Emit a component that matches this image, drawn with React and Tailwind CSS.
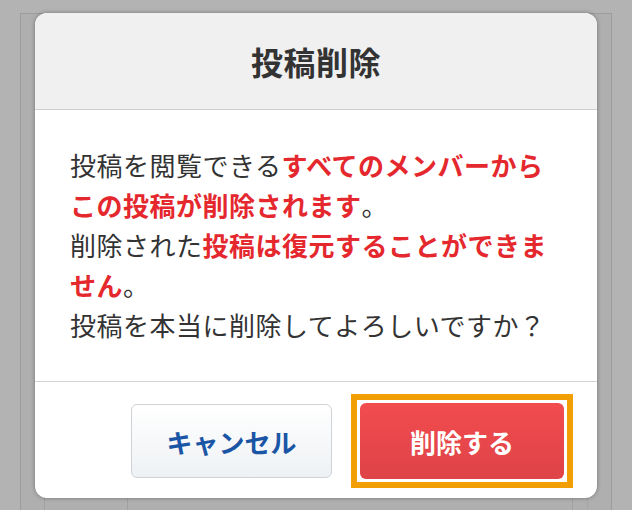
import React from 'react';

const jp = { fontFamily: '"Noto Sans CJK JP", "Noto Sans", sans-serif' };

const DeleteDialog = () => {
  return (
    <div
      className="absolute left-[35px] top-[13px] w-[562px] rounded-[12px] bg-white shadow-[0_0_4px_rgba(0,0,0,0.35)]"
      style={jp}
    >
      {/* Header */}
      <div className="h-[97px] flex items-center justify-center rounded-t-[12px] bg-[#f0f0f0] border-b border-[#d0d0d0]">
        <h2 className="text-[32px] font-bold text-[#333333] tracking-[0.5px]">投稿削除</h2>
      </div>

      {/* Body */}
      <div className="px-[35px] pt-[35px] pb-[36px] border-b border-[#d4d4d4] text-[26px] leading-[40px] tracking-[0.5px] text-[#333333]">
        <p>
          投稿を閲覧できる
          <span className="font-bold text-[#e4282e]">すべてのメンバーからこの投稿が削除されます</span>
          。
        </p>
        <p>
          削除された
          <span className="font-bold text-[#e4282e]">投稿は復元することができません</span>
          。
        </p>
        <p>投稿を本当に削除してよろしいですか？</p>
      </div>

      {/* Actions */}
      <div className="flex items-center justify-end gap-[28px] pt-[21px] pb-[19px] pr-[33px]">
        <button className="w-[201px] h-[74px] rounded-[6px] border border-[#cfd3d8] bg-gradient-to-b from-white to-[#eef1f4] text-[26px] font-bold text-[#1b55a6]">
          キャンセル
        </button>
        <div className="relative">
          {/* Focus ring */}
          <span className="absolute -inset-[9px] border-[6px] border-[#f29f05] pointer-events-none" />
          <button className="block w-[204px] h-[76px] rounded-[6px] bg-gradient-to-b from-[#f24c4f] to-[#de4347] text-[26px] font-bold text-white">
            削除する
          </button>
        </div>
      </div>
    </div>
  );
};

export default function App() {
  return (
    <div className="relative w-[632px] h-[510px] overflow-hidden bg-[#b3b3b3]">
      {/* Dimmed page behind the dialog */}
      <div className="mx-[20px] mt-[13px] h-[600px] border border-[#9c9c9c] bg-[#afafaf] flex">
        <div className="w-[24px] border-r border-[#a0a0a0]" />
        <div className="w-[83px] border-r border-[#a0a0a0]" />
        <div className="flex-1 border-r border-[#a0a0a0]" />
        <div className="w-[15px] border-r border-[#a6a6a6]" />
        <div className="w-[23px]" />
      </div>

      <DeleteDialog />
    </div>
  );
}
